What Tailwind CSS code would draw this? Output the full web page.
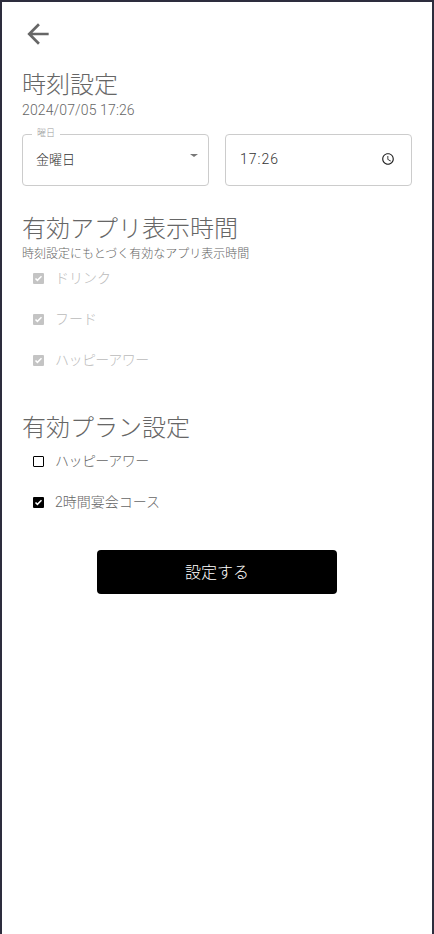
<!DOCTYPE html>
<html lang="ja">
<head>
    <meta charset="UTF-8" />
    <meta name="viewport" content="width=device-width, initial-scale=1" />
    <title>時刻設定</title>
    <script src="https://cdn.jsdelivr.net/npm/@tailwindcss/browser@4"></script>
</head>
<body class="bg-white font-['Roboto','Noto_Sans_CJK_JP',sans-serif] font-light overflow-hidden">
    <div class="h-[934px] w-[434px] border-t-2 border-l-2 border-r-2 border-[#2d2d3d] bg-white pl-5 pr-5">
        <!-- back -->
        <div class="h-[44px] pt-[16px]">
            <svg class="w-[32px] h-[32px]" viewBox="0 0 24 24" fill="#666666">
                <path d="M20 11H7.83l5.59-5.59L12 4l-8 8 8 8 1.41-1.41L7.83 13H20v-2z"></path>
            </svg>
        </div>

        <h1 class="mt-[23px] text-[24px] leading-[32px] text-[#666666]">時刻設定</h1>
        <p class="text-[14px] leading-[18px] tracking-[0.13px] text-[#666666]">2024/07/05 17:26</p>

        <div class="mt-[15px] grid grid-cols-2 gap-4 w-[390px]">
            <div class="relative h-[52px] rounded border border-[#cccccc] flex items-center pl-[13px] text-[13px] text-[#333333]">
                <span class="absolute -top-[8px] left-[9px] bg-white px-[5px] text-[9px] leading-[12px] text-[#999999]">曜日</span>
                <span>金曜日</span>
                <span class="absolute right-[10px] top-[19px] w-0 h-0 border-l-[4px] border-r-[4px] border-t-[3px] border-l-transparent border-r-transparent border-t-[#777777]"></span>
            </div>
            <div class="h-[52px] rounded border border-[#cccccc] flex items-center justify-between pl-[14px] pr-[16px] pb-[2px] text-[14px] tracking-[1px] text-[#333333]">
                <span>17:26</span>
                <svg class="w-[14px] h-[14px]" viewBox="0 0 24 24" fill="#222222">
                    <path d="M11.99 2C6.47 2 2 6.48 2 12s4.47 10 9.99 10C17.52 22 22 17.52 22 12S17.52 2 11.99 2zM12 20c-4.42 0-8-3.58-8-8s3.58-8 8-8 8 3.58 8 8-3.58 8-8 8z"></path>
                    <path d="M12.5 7H11v6l5.25 3.15.75-1.23-4.5-2.67z"></path>
                </svg>
            </div>
        </div>

        <h2 class="mt-[27px] text-[24px] leading-[32px] text-[#666666]">有効アプリ表示時間</h2>
        <p class="mt-[1px] text-[12px] leading-[16px] text-[#666666]">時刻設定にもとづく有効なアプリ表示時間</p>

        <div class="mt-[6px] flex flex-col gap-[21px] pl-[11px] text-[14px] leading-[20px] text-[#bbbbbb]">
            <div class="flex items-center gap-[11px]">
                <span class="w-[11px] h-[11px] rounded-[1px] bg-[#c4c4c4] flex items-center justify-center">
                    <svg class="w-[9px] h-[9px]" viewBox="0 0 24 24" fill="none" stroke="#ffffff" stroke-width="4"><path d="M4 12l5 5 11-11"></path></svg>
                </span>
                <span>ドリンク</span>
            </div>
            <div class="flex items-center gap-[11px]">
                <span class="w-[11px] h-[11px] rounded-[1px] bg-[#c4c4c4] flex items-center justify-center">
                    <svg class="w-[9px] h-[9px]" viewBox="0 0 24 24" fill="none" stroke="#ffffff" stroke-width="4"><path d="M4 12l5 5 11-11"></path></svg>
                </span>
                <span>フード</span>
            </div>
            <div class="flex items-center gap-[11px]">
                <span class="w-[11px] h-[11px] rounded-[1px] bg-[#c4c4c4] flex items-center justify-center">
                    <svg class="w-[9px] h-[9px]" viewBox="0 0 24 24" fill="none" stroke="#ffffff" stroke-width="4"><path d="M4 12l5 5 11-11"></path></svg>
                </span>
                <span class="tracking-[-0.55px]">ハッピーアワー</span>
            </div>
        </div>

        <h2 class="mt-[42px] text-[24px] leading-[32px] text-[#666666]">有効プラン設定</h2>

        <div class="mt-[7px] flex flex-col gap-[21px] pl-[11px] text-[14px] leading-[20px] text-[#666666]">
            <div class="flex items-center gap-[11px]">
                <span class="w-[11px] h-[11px] rounded-[1px] border-[1.5px] border-black"></span>
                <span class="tracking-[-0.55px]">ハッピーアワー</span>
            </div>
            <div class="flex items-center gap-[11px]">
                <span class="w-[11px] h-[11px] rounded-[1px] bg-black flex items-center justify-center">
                    <svg class="w-[9px] h-[9px]" viewBox="0 0 24 24" fill="none" stroke="#ffffff" stroke-width="4"><path d="M4 12l5 5 11-11"></path></svg>
                </span>
                <span>2時間宴会コース</span>
            </div>
        </div>

        <div class="mt-[38px] w-[390px] flex justify-center">
            <button class="w-[240px] h-[44px] pt-[2px] rounded bg-black text-white text-[16px] font-light">設定する</button>
        </div>
    </div>
</body>
</html>
